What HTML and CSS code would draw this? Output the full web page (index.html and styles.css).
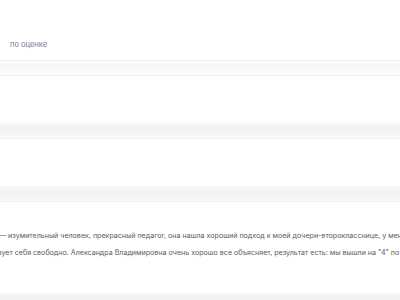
FILE: index.html
```html
<!DOCTYPE html>
<html lang="ru">
<head>
  <meta charset="UTF-8">
  <title>Отзывы</title>
  <link rel="stylesheet" href="styles.css">
</head>
<body>
  <div class="filter">
    <span class="sort">по оценке</span>
  </div>

  <div class="gap gap-top"></div>
  <div class="card card-short"></div>
  <div class="gap"></div>
  <div class="card card-short"></div>
  <div class="gap"></div>

  <div class="card card-review">
    <p class="review-text">
      <span class="line line-first">— изумительный человек, прекрасный педагог, она нашла хороший подход к моей дочери-второкласснице, у меня</span>
      <span class="line line-second">чувствует себя свободно. Александра Владимировна очень хорошо все объясняет, результат есть: мы вышли на "4" по математике.</span>
    </p>
  </div>
  <div class="gap"></div>
</body>
</html>
```

FILE: styles.css
```css
* {
  box-sizing: border-box;
  margin: 0;
  padding: 0;
}

body {
  font-family: Inter, 'Liberation Sans', sans-serif;
  background: #ffffff;
  color: #555555;
  overflow: hidden;
}

.filter {
  height: 60px;
  padding: 31px 0 0 10px;
}

.sort {
  font-size: 7.5px;
  line-height: 12px;
  color: #737b8f;
}

.gap {
  height: 16px;
  background: linear-gradient(#f8f8f8, #f1f1f1 40%, #f9f9f9);
  border-bottom: 1px solid #f2f2f2;
}

.gap-top {
  border-top: 1px solid #eeeeee;
  background: linear-gradient(#fefefe, #f5f5f5 25%, #fefefe);
}

.card {
  background: #ffffff;
}

.card-short {
  height: 47px;
}

.card-review {
  height: 91px;
  padding-top: 25px;
  overflow: hidden;
}

.review-text {
  font-size: 7.1px;
  line-height: 17px;
  color: #5a5a5a;
  white-space: nowrap;
}

.line {
  display: block;
}

.line-first {
  margin-left: -1px;
}

.line-second {
  margin-left: -22px;
}
```
